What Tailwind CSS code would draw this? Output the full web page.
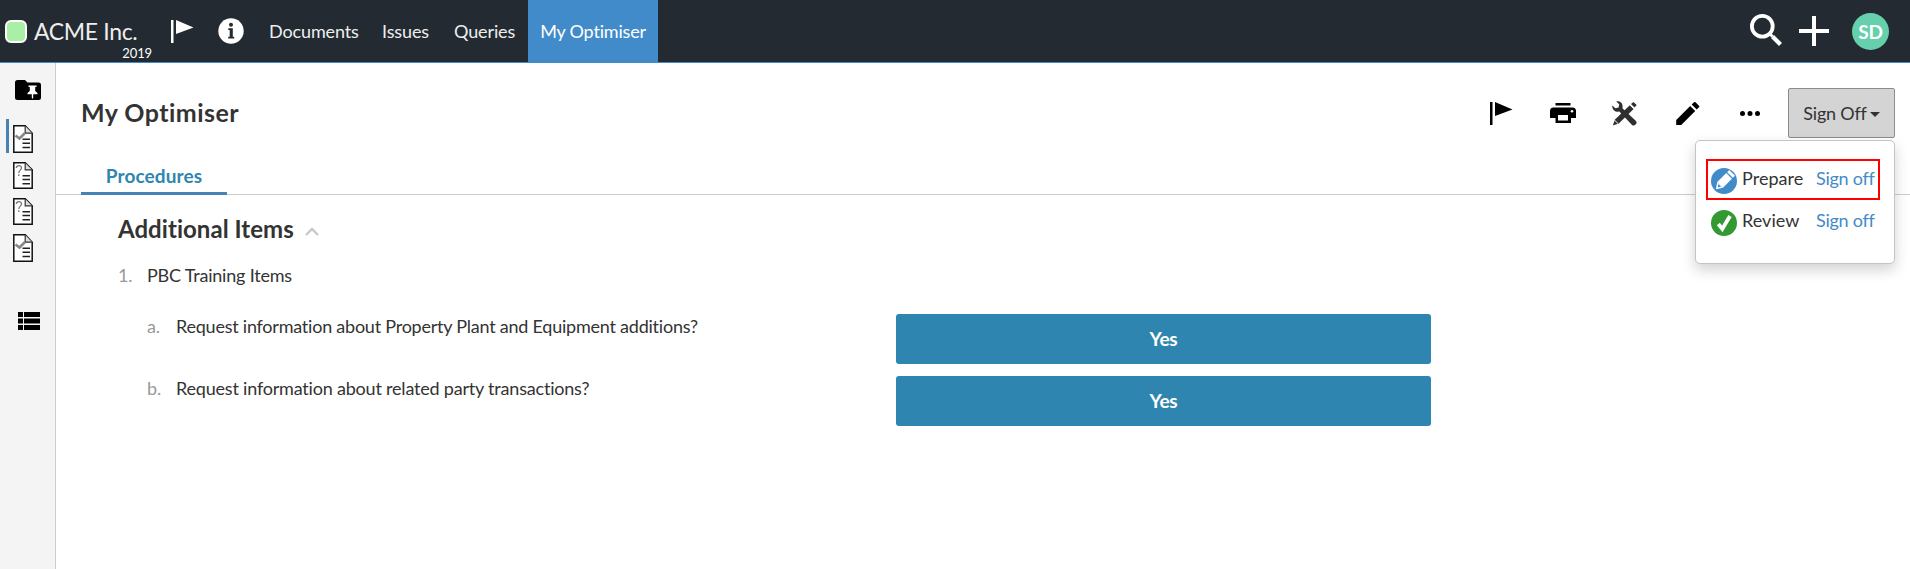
<!DOCTYPE html>
<html lang="en">
<head>
<meta charset="utf-8">
<title>My Optimiser</title>
<script src="https://cdn.jsdelivr.net/npm/@tailwindcss/browser@4"></script>
</head>
<body class="h-[569px] overflow-hidden bg-white font-['Lato',sans-serif] text-[18px] leading-6 tracking-[-0.12px] text-[#333] flex flex-col">
<svg class="hidden">
  <symbol id="flag" viewBox="0 0 23 23"><path d="M0 0h2.500v23H0zM5 0l17.500 7.500L5 14z"/></symbol>
  <symbol id="page" viewBox="0 0 20 28"><path d="M.8.8h11.400l7 7.400v19H.8z" fill="#fff" stroke="#111" stroke-width="1.500"/><path d="M12.200 1v7.200h7" fill="#ddd" stroke="#333" stroke-width="1.200"/><path d="M9.500 14.200h7.500M9.500 18.200h7.500M9.500 22.500h7.500" stroke="#222" stroke-width="1.500"/></symbol>
</svg>
<header class="h-[63px] shrink-0 bg-[#232a31] border-b border-[#428bca] flex items-stretch text-white">
  <div class="w-[158px] relative pl-[5px] flex items-center text-[#eee]">
    <span class="w-[22px] h-[23px] mt-px rounded-[6px] border-2 border-white bg-[#a8f0a6]"></span>
    <span class="ml-[7px] text-[23px] tracking-[-0.35px] whitespace-nowrap">ACME Inc.</span>
    <span class="absolute right-[6px] top-[45px] text-[13px] leading-4 text-white">2019</span>
  </div>
  <div class="w-[60px] flex items-center pl-[13px]">
    <svg class="w-[23px] h-[23px] fill-white"><use href="#flag"/></svg>
  </div>
  <div class="w-[39px] flex items-center">
    <svg class="w-[26px] h-[26px]" viewBox="0 0 26 26"><circle cx="13" cy="13" r="12.700" fill="#fff"/><circle cx="13" cy="6.700" r="2" fill="#232a31"/><path d="M10.300 10.300h4.500v8.500h1.400v1.700h-6v-1.700h1.500V12h-1.400z" fill="#232a31"/></svg>
  </div>
  <nav class="flex grow text-[#eee]">
    <a class="flex items-center w-[113px] pl-[12px]">Documents</a>
    <a class="flex items-center w-[72px] pl-[12px]">Issues</a>
    <a class="flex items-center w-[86px] pl-[12px]">Queries</a>
    <a class="flex items-center w-[130px] justify-center bg-[#428bca] text-white tracking-[-0.18px]">My Optimiser</a>
  </nav>
  <div class="flex items-center pr-[21px]">
    <svg class="w-8 h-8 -mt-[2px] mr-[17px]" viewBox="0 0 32 32" fill="none" stroke="#fff"><circle cx="12.300" cy="12.300" r="10.400" stroke-width="3.800"/><path d="M20 20l2.500 2.500" stroke-width="3"/><path d="M22.500 22.500l8 8" stroke-width="4.200"/></svg>
    <svg class="w-[30px] h-[30px] mr-[23px]" viewBox="0 0 30 30"><path d="M15 0v30M0 15h30" stroke="#fff" stroke-width="4"/></svg>
    <span class="w-[37px] h-[37px] mt-px rounded-full bg-[#66cfab] flex items-center justify-center font-bold text-[19px]">SD</span>
  </div>
</header>
<div class="flex grow min-h-0">
  <aside class="w-[56px] shrink-0 bg-[#f4f4f4] border-r border-[#ccc] flex flex-col">
    <svg class="w-[26px] h-[20px] mt-[17px] ml-[15px]" viewBox="0 0 26 20"><path d="M2.500 0h7.500l2.500 2.500h11A2.500 2.500 0 0 1 26 5v12.500a2.500 2.500 0 0 1-2.500 2.500h-21A2.500 2.500 0 0 1 0 17.500v-15A2.500 2.500 0 0 1 2.500 0z"/><path d="M13.500 5.500h8V7h-1.300v4l2.300 2v1.200h-4.300V18l-.7.800-.7-.8v-3.800h-4.300V13l2.300-2V7h-1.300z" fill="#fff"/></svg>
    <div class="mt-[19px] ml-[6px] h-[34px] border-l-[3px] border-[#4682b4] pt-[6px] pl-[4px]">
      <svg class="w-[20px] h-[28px]"><use href="#page"/><path d="M2.500 10.500L6.500 13.500 12 8" fill="none" stroke="#888" stroke-width="2.600"/></svg>
    </div>
    <svg class="w-[20px] h-[27px] mt-[9px] ml-[13px] shrink-0" viewBox="0 0 20 28" preserveAspectRatio="none"><use href="#page"/><path d="M3.300 6.300C3.500 2.800 8.600 3 8.500 6.200 8.400 8.500 5.800 8.500 5.800 11.500M5.800 12.800v1.700" fill="none" stroke="#777" stroke-width="1.300"/></svg>
    <svg class="w-[20px] h-[27px] mt-[9px] ml-[13px] shrink-0" viewBox="0 0 20 28" preserveAspectRatio="none"><use href="#page"/><path d="M3.300 6.300C3.500 2.800 8.600 3 8.500 6.200 8.400 8.500 5.800 8.500 5.800 11.500M5.800 12.800v1.700" fill="none" stroke="#777" stroke-width="1.300"/></svg>
    <svg class="w-[20px] h-[28px] mt-[9px] ml-[13px] shrink-0"><use href="#page"/><path d="M2.500 10.500L6.500 13.500 12 8" fill="none" stroke="#888" stroke-width="2.600"/></svg>
    <svg class="w-[22px] h-[18px] mt-[50px] ml-[18px] shrink-0" viewBox="0 0 22 18"><path d="M0 0h5v5H0zM6 0h16v5H6zM0 6.500h5v5H0zM6 6.500h16v5H6zM0 13h5v5H0zM6 13h16v5H6z"/></svg>
  </aside>
  <main class="grow min-w-0">
    <div class="h-[99px] pt-[25px] pl-[25px] pr-[15px] flex items-start">
      <h1 class="grow h-[48px] flex items-center text-[25px] font-bold tracking-[0.45px]">My Optimiser</h1>
      <div class="h-[50px] flex items-center">
        <svg class="w-[23px] h-[23px] mr-[37px]"><use href="#flag"/></svg>
        <svg class="w-[26px] h-[20px] mr-[36px]" viewBox="0 0 26 20"><path d="M5.500 0h15v2.500h-15zM3.500 4.500h19A3.500 3.500 0 0 1 26 8v7h-5v5H5.500v-5H0V8a3.500 3.500 0 0 1 3.500-3.500z"/><path d="M8 12h10v5.500H8z" fill="#fff"/><circle cx="22" cy="8.300" r="1.300" fill="#fff"/></svg>
        <svg class="w-[25px] h-[25px] mr-[39px]" viewBox="0 0 25 25" fill="#2f2f2f"><path d="M4.200.6C8.500-.6 11.400 3 10.400 7.200L24 20a2.900 2.900 0 0 1-4 4L7.300 10.600C3.500 11.500-.2 8.500.3 4.400L3.400 7.300 6.600 6.500 7.200 3.300z"/><path d="M17.800 4.300l3.800 3.800L6.800 22.600.8 24.500l2.200-6z"/><path d="M19 3l2.400-2.100 3.300 3.200-2.200 2.500z"/><path d="M2.600 19.200l3.500 3.400M17.900 3.600l4 3.900" stroke="#fff" stroke-width="1"/></svg>
        <svg class="w-[24px] h-[23px] mr-[40px]" viewBox="0 0 24 23"><path d="M14.200 4l5 5L5.200 23H.2v-5zM15.700 2.500L18 .3a1.100 1.100 0 0 1 1.500 0l3.500 3.500a1.100 1.100 0 0 1 0 1.500l-2.300 2.200z"/></svg>
        <svg class="w-[20px] h-[5px] mr-[28px]" viewBox="0 0 20 5"><circle cx="2.500" cy="2.500" r="2.500"/><circle cx="10" cy="2.500" r="2.500"/><circle cx="17.500" cy="2.500" r="2.500"/></svg>
      </div>
      <div class="relative">
        <button class="w-[107px] h-[50px] rounded-[2px] border border-[#8c8c8c] bg-[#d4d4d4] flex items-center justify-center gap-[3px] pb-px tracking-[-0.2px]">Sign Off<span class="mt-[3px] border-x-[5px] border-t-[5px] border-x-transparent border-t-[#333]"></span></button>
        <div class="absolute right-0 top-[52px] w-[200px] h-[124px] rounded-[5px] border border-[#c4c4c4] bg-white shadow-[0_6px_14px_rgba(0,0,0,0.18)] pt-[18px] pl-[10px]">
          <div class="w-[174px] h-[41px] border-2 border-[#f00] flex items-start pl-[3px] pt-[7px]">
            <svg class="w-[26px] h-[26px]" viewBox="0 0 26 26"><circle cx="13" cy="13" r="13" fill="#428bca"/><g transform="rotate(45 13 13)" fill="#fff"><path d="M9 1.500h8v3H9zM9 5.800h8v12.700H9z"/><path d="M9 18.500h8l-4 6z"/><path d="M11 19.200h4l-2 2.500z" fill="#428bca"/></g></svg>
            <span class="w-[79px] pl-[5px] -mt-[2px] tracking-[0.05px]">Prepare</span><a class="-mt-[2px] text-[#428bca] tracking-[-0.25px]">Sign off</a>
          </div>
          <div class="h-[41px] flex items-start pl-[5px] pt-[10px]">
            <svg class="w-[26px] h-[26px]" viewBox="0 0 26 26"><circle cx="13" cy="13" r="13" fill="#339933"/><path d="M7.300 14l4 5 7.700-13" fill="none" stroke="#fff" stroke-width="3.800"/></svg>
            <span class="w-[79px] pl-[5px] -mt-[2px] tracking-[0.05px]">Review</span><a class="-mt-[2px] text-[#428bca] tracking-[-0.25px]">Sign off</a>
          </div>
        </div>
      </div>
    </div>
    <div class="h-[33px] pl-[25px] border-b border-[#ccc] flex">
      <a class="w-[146px] h-[33px] border-b-[3px] border-[#4682b4] flex justify-center text-[19px] leading-[28px] font-bold tracking-[0.1px] text-[#2e86b0]">Procedures</a>
    </div>
    <section class="pl-[62px] pt-[20px]">
      <h2 class="h-[28px] flex items-center text-[24px] font-bold tracking-[0.04px]">Additional Items<svg class="w-[14px] h-[9px] ml-[11px] mt-[4px]" viewBox="0 0 14 9"><path d="M1 8l6-6 6 6" fill="none" stroke="#c8c8c8" stroke-width="2.300"/></svg></h2>
      <div class="mt-[20px] flex h-6"><span class="w-[29px] text-[#999]">1.</span><span class="tracking-[-0.2px]">PBC Training Items</span></div>
      <div class="mt-[27px] ml-[29px] flex h-[50px]"><span class="w-[29px] text-[#999]">a.</span><span class="w-[720px] tracking-[-0.23px]">Request information about Property Plant and Equipment additions?</span><button class="w-[535px] rounded-[3px] bg-[#2e86b0] text-white font-bold text-[19px] tracking-[-0.3px] pb-px">Yes</button></div>
      <div class="mt-[12px] ml-[29px] flex h-[50px]"><span class="w-[29px] text-[#999]">b.</span><span class="w-[720px] tracking-[-0.2px]">Request information about related party transactions?</span><button class="w-[535px] rounded-[3px] bg-[#2e86b0] text-white font-bold text-[19px] tracking-[-0.3px]">Yes</button></div>
    </section>
  </main>
</div>
</body>
</html>
